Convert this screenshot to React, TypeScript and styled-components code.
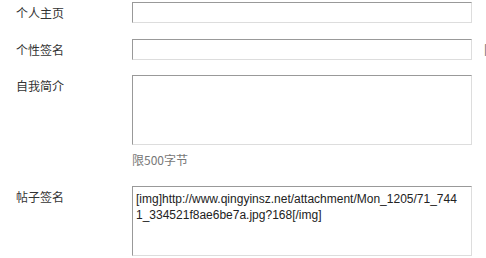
import React from 'react';
import styled, { createGlobalStyle } from 'styled-components';

const GlobalStyle = createGlobalStyle`
	html, body {
		margin: 0;
		padding: 0;
		background: #fff;
		overflow: hidden;
	}
	body {
		font-family: "Liberation Sans", "Noto Sans CJK SC", sans-serif;
		font-size: 12px;
		color: #333;
	}
`;

const signature = '[img]http://www.qingyinsz.net/attachment/Mon_1205/71_7441_334521f8ae6be7a.jpg?168[/img]';

export default function App() {
	return (
		<Form>
			<GlobalStyle />
			<Row $top={2}>
				<Label>个人主页</Label>
				<Field>
					<TextInput defaultValue="" />
				</Field>
			</Row>
			<Row $top={16}>
				<Label>个性签名</Label>
				<Field>
					<TextInput defaultValue="" />
					<Aside>限</Aside>
				</Field>
			</Row>
			<Row $top={15}>
				<Label>自我简介</Label>
				<Column>
					<TextArea defaultValue="" />
					<Hint>限500字节</Hint>
				</Column>
			</Row>
			<Row $top={18}>
				<Label>帖子签名</Label>
				<Field>
					<TextArea defaultValue={signature} />
				</Field>
			</Row>
		</Form>
	);
}

const Form = styled.form`
	width: 520px;
	display: flex;
	flex-direction: column;
`;

const Row = styled.div<{ $top: number }>`
	display: flex;
	align-items: flex-start;
	margin-top: ${p => p.$top}px;
`;

const Label = styled.div`
	width: 116px;
	padding-left: 16px;
	flex-shrink: 0;
	line-height: 21px;
	font-family: "Noto Sans CJK SC", sans-serif;
	font-size: 12px;
	color: #333;
`;

const Field = styled.div`
	display: flex;
	align-items: center;
	gap: 12px;
`;

const Column = styled.div`
	display: flex;
	flex-direction: column;
`;

const TextInput = styled.input`
	box-sizing: border-box;
	width: 340px;
	height: 21px;
	margin: 0;
	padding: 1px 3px;
	border: 1px solid;
	border-color: #999 #ddd #ddd #999;
	background: #fff;
	font-family: "Liberation Sans", sans-serif;
	font-size: 12px;
	outline: none;
`;

const TextArea = styled.textarea`
	box-sizing: border-box;
	width: 340px;
	height: 70px;
	margin: 0;
	padding: 4px 9px 4px 3px;
	border: 1px solid;
	border-color: #999 #ddd #ddd #999;
	background: #fff;
	font-family: "Liberation Sans", sans-serif;
	font-size: 12px;
	line-height: 16px;
	color: #222;
	resize: none;
	outline: none;
	overflow: hidden;
	display: block;
`;

const Hint = styled.div`
	margin-top: 7px;
	line-height: 16px;
	font-family: "Noto Sans CJK SC", sans-serif;
	font-size: 12px;
	color: #777;
`;

const Aside = styled.span`
	font-family: "Noto Sans CJK SC", sans-serif;
	font-size: 12px;
	color: #666;
	white-space: nowrap;
`;
